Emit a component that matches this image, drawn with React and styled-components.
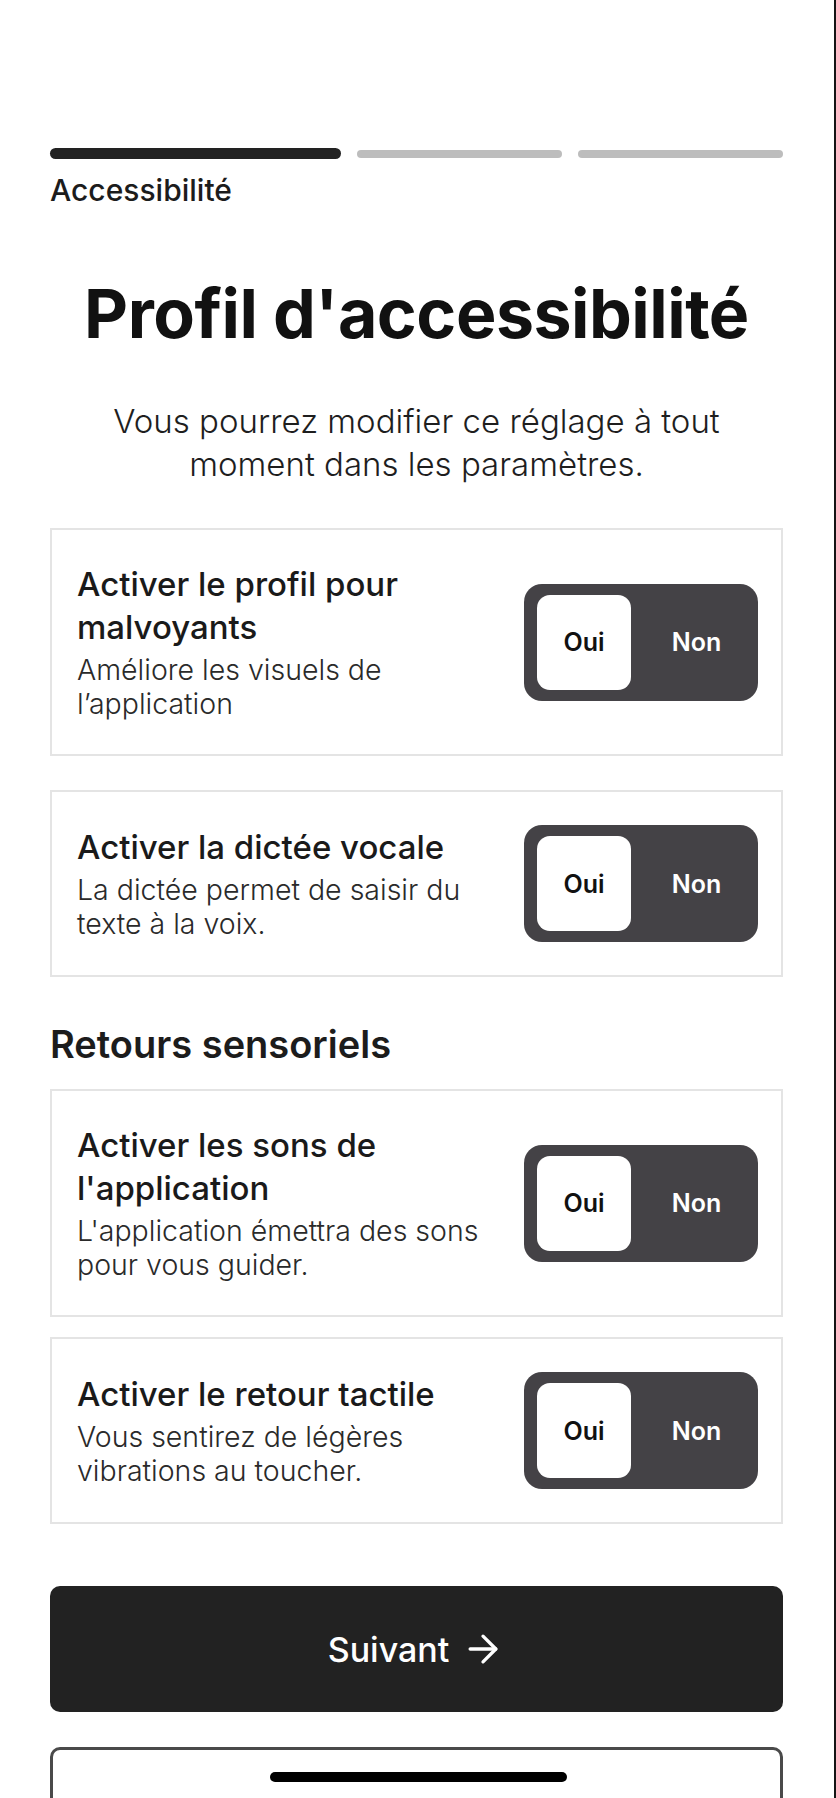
import React from "react";
import styled, { createGlobalStyle } from "styled-components";
import { ArrowRight } from "lucide-react";

const Global = createGlobalStyle`
  html, body {
    margin: 0;
    padding: 0;
    background: #ffffff;
    overflow: hidden;
  }
  * { box-sizing: border-box; }
  body {
    font-family: Inter, "Noto Sans", "Liberation Sans", sans-serif;
    color: #1c1c1c;
  }
`;

const Screen = styled.div`
  position: relative;
  width: 836px;
  height: 1798px;
  overflow: hidden;
  border-right: 2px solid #151515;
  padding: 148px 51px 0 50px;
  display: flex;
  flex-direction: column;
  & > * {
    flex-shrink: 0;
  }
`;

const Progress = styled.div`
  display: flex;
  align-items: center;
  gap: 16px;
`;

const Step = styled.div`
  flex: ${(p) => p.$grow};
  height: ${(p) => (p.$active ? "11px" : "8px")};
  border-radius: 6px;
  background: ${(p) => (p.$active ? "#222222" : "#bdbdbd")};
`;

const StepLabel = styled.div`
  margin-top: 14px;
  font-size: 30px;
  line-height: 34px;
  font-weight: 500;
  color: #1c1c1c;
`;

const Title = styled.h1`
  margin: 66px 0 0;
  font-size: 68px;
  line-height: 80px;
  font-weight: 700;
  letter-spacing: -0.5px;
  text-align: center;
  color: #111111;
`;

const Subtitle = styled.p`
  margin: 47px auto 0;
  max-width: 680px;
  font-size: 33px;
  line-height: 43px;
  font-weight: 300;
  text-align: center;
  color: #1e1e1e;
`;

const Cards = styled.div`
  display: flex;
  flex-direction: column;
  gap: ${(p) => p.$gap}px;
  margin-top: ${(p) => p.$top}px;
`;

const Card = styled.div`
  display: flex;
  align-items: center;
  gap: 20px;
  border: 2px solid #e4e4e4;
  padding: 33px 23px 33px 25px;
`;

const CardText = styled.div`
  flex: 1;
  min-width: 0;
  display: flex;
  flex-direction: column;
  gap: 4px;
`;

const CardTitle = styled.div`
  font-size: 33px;
  line-height: 43px;
  font-weight: 500;
  color: #1a1a1a;
`;

const CardDesc = styled.div`
  font-size: 28.5px;
  line-height: 34px;
  font-weight: 300;
  color: #2a2a2a;
`;

const Toggle = styled.div`
  flex-shrink: 0;
  width: 234px;
  height: 117px;
  border-radius: 18px;
  background: #444246;
  padding: 11px 13px;
  display: flex;
  align-items: stretch;
`;

const Knob = styled.div`
  border-radius: 13px;
  background: ${(p) => (p.$on ? "#ffffff" : "transparent")};
  color: ${(p) => (p.$on ? "#111111" : "#ffffff")};
  display: flex;
  align-items: center;
  justify-content: center;
  font-size: 25px;
  font-weight: 600;
  flex: ${(p) => (p.$on ? "0 0 94px" : "1")};
  padding-left: ${(p) => (p.$on ? "0" : "17px")};
`;

const SectionHeading = styled.h2`
  margin: 46px 0 0;
  font-size: 38px;
  line-height: 42px;
  font-weight: 600;
  color: #1c1c1c;
`;

const PrimaryButton = styled.button`
  margin-top: 62px;
  height: 126px;
  width: 100%;
  border: none;
  border-radius: 10px;
  background: #222222;
  color: #ffffff;
  font-family: inherit;
  font-size: 34px;
  font-weight: 500;
  display: flex;
  align-items: center;
  justify-content: center;
  gap: 12px;
`;

const SecondaryButton = styled.button`
  margin-top: 35px;
  height: 126px;
  width: 100%;
  border: 3px solid #4a4a4a;
  border-radius: 10px;
  background: #ffffff;
`;

const HomeIndicator = styled.div`
  position: absolute;
  left: 270px;
  top: 1772px;
  width: 297px;
  height: 10px;
  border-radius: 6px;
  background: #000000;
`;

const Setting = ({ title, desc }) => (
  <Card>
    <CardText>
      <CardTitle>{title}</CardTitle>
      <CardDesc>{desc}</CardDesc>
    </CardText>
    <Toggle>
      <Knob $on>Oui</Knob>
      <Knob>Non</Knob>
    </Toggle>
  </Card>
);

export default function App() {
  return (
    <>
      <Global />
      <Screen>
        <Progress>
          <Step $active $grow={291} />
          <Step $grow={205} />
          <Step $grow={205} />
        </Progress>
        <StepLabel>Accessibilité</StepLabel>
        <Title>Profil d'accessibilité</Title>
        <Subtitle>
          Vous pourrez modifier ce réglage à tout moment dans les paramètres.
        </Subtitle>
        <Cards $gap={34} $top={42}>
          <Setting
            title="Activer le profil pour malvoyants"
            desc="Améliore les visuels de l’application"
          />
          <Setting
            title="Activer la dictée vocale"
            desc="La dictée permet de saisir du texte à la voix."
          />
        </Cards>
        <SectionHeading>Retours sensoriels</SectionHeading>
        <Cards $gap={20} $top={24}>
          <Setting
            title="Activer les sons de l'application"
            desc="L'application émettra des sons pour vous guider."
          />
          <Setting
            title="Activer le retour tactile"
            desc="Vous sentirez de légères vibrations au toucher."
          />
        </Cards>
        <PrimaryButton>
          Suivant
          <ArrowRight size={44} strokeWidth={1.8} />
        </PrimaryButton>
        <SecondaryButton aria-label="Retour" />
        <HomeIndicator />
      </Screen>
    </>
  );
}
